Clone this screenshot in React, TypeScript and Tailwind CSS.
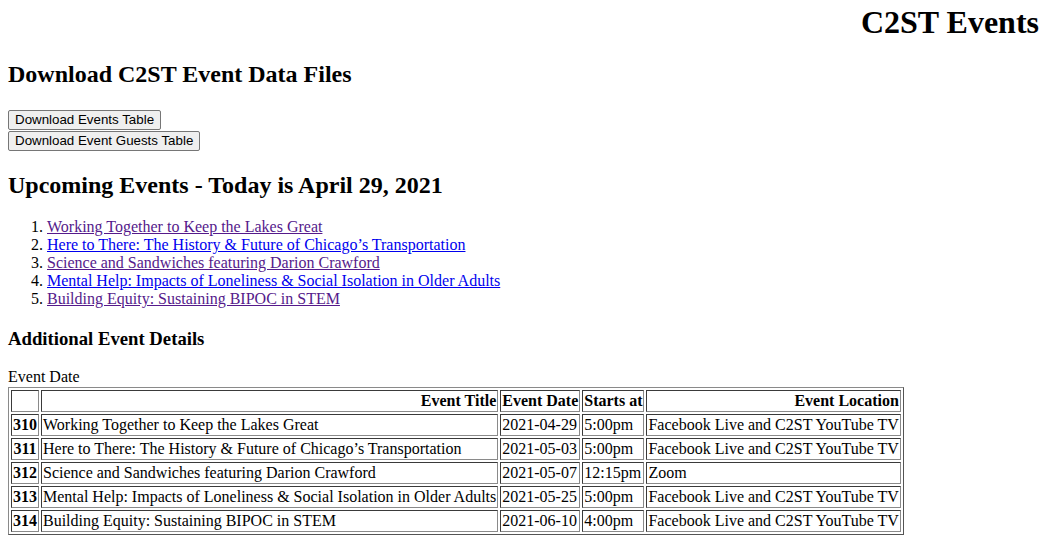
import React from "react";

const rows = [
  ["310", "Working Together to Keep the Lakes Great", "2021-04-29", "5:00pm", "Facebook Live and C2ST YouTube TV"],
  ["311", "Here to There: The History & Future of Chicago\u2019s Transportation", "2021-05-03", "5:00pm", "Facebook Live and C2ST YouTube TV"],
  ["312", "Science and Sandwiches featuring Darion Crawford", "2021-05-07", "12:15pm", "Zoom"],
  ["313", "Mental Help: Impacts of Loneliness & Social Isolation in Older Adults", "2021-05-25", "5:00pm", "Facebook Live and C2ST YouTube TV"],
  ["314", "Building Equity: Sustaining BIPOC in STEM", "2021-06-10", "4:00pm", "Facebook Live and C2ST YouTube TV"],
];

const links: [string, boolean][] = [
  ["Working Together to Keep the Lakes Great", true],
  ["Here to There: The History & Future of Chicago\u2019s Transportation", false],
  ["Science and Sandwiches featuring Darion Crawford", true],
  ["Mental Help: Impacts of Loneliness & Social Isolation in Older Adults", false],
  ["Building Equity: Sustaining BIPOC in STEM", true],
];

const cell =
  "border border-solid border-t-[#3a3a3a] border-l-[#3a3a3a] border-r-[#8a8a8a] border-b-[#8a8a8a] p-[1px] leading-[18px]";

export default function App() {
  return (
    <div
      className="px-2 pb-4 text-[16px] leading-[18px] text-black bg-white"
      style={{ fontFamily: '"Liberation Serif", "Times New Roman", serif' }}
    >
      <h1 className="mt-[4px] mr-[17px] text-right text-[32px] font-bold leading-[37px]">C2ST Events</h1>
      <h2 className="mt-[19px] text-[24px] font-bold leading-[28px]">Download C2ST Event Data Files</h2>
      <div className="mt-[22px] flex flex-col items-start">
        <button
          className="h-[20px] px-[6px] border border-solid border-[#767676] rounded-[2px] bg-[#efefef] text-[13.33px] leading-[16px] text-black"
          style={{ fontFamily: '"Liberation Sans", Arial, sans-serif' }}
        >
          Download Events Table
        </button>
        <button
          className="mt-[1px] h-[20px] px-[6px] border border-solid border-[#767676] rounded-[2px] bg-[#efefef] text-[13.33px] leading-[16px] text-black"
          style={{ fontFamily: '"Liberation Sans", Arial, sans-serif' }}
        >
          Download Event Guests Table
        </button>
      </div>
      <h2 className="mt-[20px] text-[24px] font-bold leading-[28px]">Upcoming Events - Today is April 29, 2021</h2>
      <ol className="mt-[19px] list-decimal pl-[39px]">
        {links.map(([t, visited]) => (
          <li key={t} className="leading-[18px]">
            <a href="#" className={"underline " + (visited ? "text-[#551a8b]" : "text-[#0000ee]")}>
              {t}
            </a>
          </li>
        ))}
      </ol>
      <h3 className="mt-[20px] text-[18.72px] font-bold leading-[21px]">Additional Event Details</h3>
      <div className="mt-[19px] leading-[18px]">Event Date</div>
      <table className="mt-[1px] border-separate border-spacing-[2px] border border-solid border-t-[#8a8a8a] border-l-[#8a8a8a] border-r-[#555] border-b-[#555]">
        <thead>
          <tr>
            <th className={cell}></th>
            <th className={cell + " text-right font-bold"}>Event Title</th>
            <th className={cell + " text-right font-bold"}>Event Date</th>
            <th className={cell + " text-right font-bold"}>Starts at</th>
            <th className={cell + " text-right font-bold"}>Event Location</th>
          </tr>
        </thead>
        <tbody>
          {rows.map((r) => (
            <tr key={r[0]}>
              <th className={cell + " font-bold"}>{r[0]}</th>
              <td className={cell + " text-left"}>{r[1]}</td>
              <td className={cell + " text-left"}>{r[2]}</td>
              <td className={cell + " text-left"}>{r[3]}</td>
              <td className={cell + " text-left"}>{r[4]}</td>
            </tr>
          ))}
        </tbody>
      </table>
    </div>
  );
}
